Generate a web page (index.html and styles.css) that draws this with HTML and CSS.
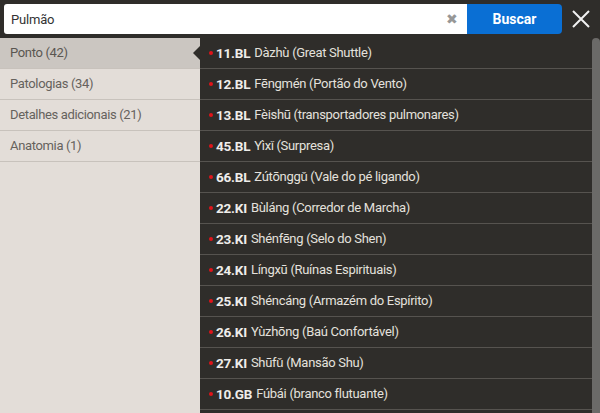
FILE: index.html
```html
<!DOCTYPE html>
<html lang="pt">
<head>
<meta charset="utf-8">
<link rel="stylesheet" href="styles.css">
</head>
<body>
<div class="app">
  <div class="search-bar">
    <div class="search-input">
      <span class="query">Pulmão</span>
      <span class="clear">✖</span>
    </div>
    <button class="search-btn">Buscar</button>
    <div class="close">
      <svg width="20" height="20" viewBox="0 0 20 20"><path d="M2 2 L18 18 M18 2 L2 18" stroke="#f2f2f2" stroke-width="2" fill="none"/></svg>
    </div>
  </div>
  <div class="main">
    <ul class="categories">
      <li class="cat active">Ponto (42)</li>
      <li class="cat">Patologias (34)</li>
      <li class="cat">Detalhes adicionais (21)</li>
      <li class="cat">Anatomia (1)</li>
    </ul>
    <div class="results">
      <ul class="list">
        <li class="item"><span class="dot"></span><b>11.BL</b> Dàzhù (Great Shuttle)</li>
        <li class="item"><span class="dot"></span><b>12.BL</b> Fēngmén (Portão do Vento)</li>
        <li class="item"><span class="dot"></span><b>13.BL</b> Fèishū (transportadores pulmonares)</li>
        <li class="item"><span class="dot"></span><b>45.BL</b> Yìxǐ (Surpresa)</li>
        <li class="item"><span class="dot"></span><b>66.BL</b> Zútōnggǔ (Vale do pé ligando)</li>
        <li class="item"><span class="dot"></span><b>22.KI</b> Bùláng (Corredor de Marcha)</li>
        <li class="item"><span class="dot"></span><b>23.KI</b> Shénfēng (Selo do Shen)</li>
        <li class="item"><span class="dot"></span><b>24.KI</b> Língxū (Ruínas Espirituais)</li>
        <li class="item"><span class="dot"></span><b>25.KI</b> Shéncáng (Armazém do Espírito)</li>
        <li class="item"><span class="dot"></span><b>26.KI</b> Yùzhōng (Baú Confortável)</li>
        <li class="item"><span class="dot"></span><b>27.KI</b> Shūfǔ (Mansão Shu)</li>
        <li class="item"><span class="dot"></span><b>10.GB</b> Fúbái (branco flutuante)</li>
        <li class="item empty"></li>
      </ul>
      <div class="scrollbar"></div>
      <div class="pointer"></div>
    </div>
  </div>
</div>
</body>
</html>
```

FILE: styles.css
```css
* { box-sizing: border-box; }
html, body {
  margin: 0;
  padding: 0;
  width: 600px;
  height: 413px;
  overflow: hidden;
  background: #2f2d2a;
  font-family: Roboto, "Liberation Sans", Arial, sans-serif;
  font-size: 13px;
}
.app {
  display: flex;
  flex-direction: column;
  height: 413px;
}
.search-bar {
  display: flex;
  align-items: center;
  padding: 4px 0 4px 4px;
  height: 38px;
}
.search-input {
  flex: 1;
  height: 30px;
  background: #ffffff;
  border-radius: 3px 0 0 3px;
  display: flex;
  align-items: center;
  justify-content: space-between;
  padding: 0 9px 0 7px;
}
.query {
  color: #333333;
  font-size: 13px;
  letter-spacing: -0.2px;
}
.clear {
  color: #979797;
  font-size: 14px;
}
.search-btn {
  width: 95px;
  height: 30px;
  border: none;
  background: #0a6fd4;
  color: #ffffff;
  font-family: Roboto, "Liberation Sans", Arial, sans-serif;
  font-weight: bold;
  font-size: 14px;
  border-radius: 0 4px 4px 0;
  padding: 0;
}
.close {
  width: 38px;
  height: 30px;
  display: flex;
  align-items: center;
  justify-content: center;
}
.main {
  flex: 1;
  display: flex;
  min-height: 0;
}
.categories {
  width: 200px;
  margin: 0;
  padding: 0;
  list-style: none;
  background: #e3ddd8;
}
.cat {
  height: 31px;
  line-height: 30px;
  padding-left: 10px;
  color: #66625d;
  letter-spacing: -0.35px;
  border-bottom: 1px solid #c8c2bc;
}
.cat.active {
  background: #cbc6c1;
  color: #5a5651;
}
.results {
  flex: 1;
  position: relative;
  display: flex;
  min-width: 0;
}
.list {
  flex: 1;
  margin: 0;
  padding: 0;
  list-style: none;
  overflow: hidden;
}
.item {
  height: 31px;
  line-height: 30px;
  padding-left: 9px;
  color: #e4e1dd;
  letter-spacing: -0.3px;
  border-bottom: 1px solid #56534f;
  white-space: nowrap;
  display: flex;
  align-items: center;
}
.item b {
  font-weight: bold;
  font-size: 13.5px;
  letter-spacing: -0.2px;
  color: #efedea;
  margin-right: 4px;
}
.dot {
  width: 4px;
  height: 4px;
  border-radius: 50%;
  background: #e0141a;
  margin-right: 3px;
  flex: none;
}
.scrollbar {
  width: 8px;
  background: #6b6a68;
  border-radius: 4px 4px 0 0;
}
.pointer {
  position: absolute;
  left: -7px;
  top: 8px;
  width: 0;
  height: 0;
  border-top: 7px solid transparent;
  border-bottom: 7px solid transparent;
  border-right: 7px solid #2f2d2a;
}
```
